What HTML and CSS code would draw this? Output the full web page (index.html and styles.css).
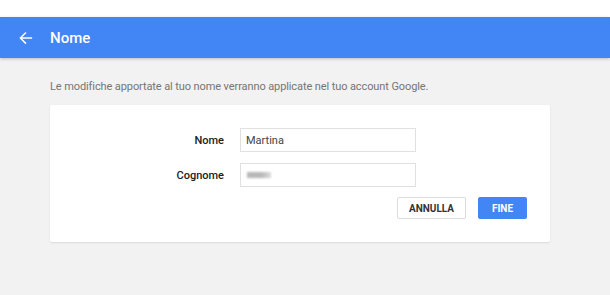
FILE: index.html
```html
<!DOCTYPE html>
<html>
<head>
<meta charset="utf-8">
<link rel="stylesheet" href="styles.css">
</head>
<body>
<div class="topstrip"></div>
<header class="appbar">
  <svg class="back" width="14" height="14" viewBox="0 0 16 16"><path d="M15 7.2H3.6l5-5L7.4 1 0.4 8l7 7 1.2-1.2-5-5H15z" fill="#fff"/></svg>
  <h1 class="title">Nome</h1>
</header>
<main class="content">
  <p class="desc">Le modifiche apportate al tuo nome verranno applicate nel tuo account Google.</p>
  <section class="card">
    <div class="row">
      <label class="label">Nome</label>
      <div class="input">Martina</div>
    </div>
    <div class="row">
      <label class="label">Cognome</label>
      <div class="input"><span class="blur"></span></div>
    </div>
    <div class="actions">
      <button class="btn btn-cancel">ANNULLA</button>
      <button class="btn btn-ok">FINE</button>
    </div>
  </section>
</main>
</body>
</html>
```
FILE: styles.css
```css
html, body {
  margin: 0;
  padding: 0;
}
body {
  background: #f2f2f2;
  font-family: Roboto, "Liberation Sans", Arial, sans-serif;
  width: 610px;
  height: 295px;
  overflow: hidden;
}
.topstrip {
  height: 17px;
  background: #ffffff;
}
.appbar {
  height: 41px;
  background: #4285f4;
  display: flex;
  align-items: center;
  box-shadow: 0 1px 3px rgba(0,0,0,0.22);
  position: relative;
}
.back {
  margin-left: 19px;
  margin-right: 17px;
}
.title {
  margin: 0;
  color: #ffffff;
  font-size: 15px;
  font-weight: 500;
}
.content {
  padding: 22px 60px 0 50px;
}
.desc {
  margin: 0 0 11px 0;
  font-size: 11px;
  letter-spacing: -0.1px;
  color: #757575;
  line-height: 14px;
}
.card {
  background: #ffffff;
  width: 500px;
  box-sizing: border-box;
  padding: 23px 23px 23px 0;
  border-radius: 2px;
  box-shadow: 0 1px 2px rgba(0,0,0,0.1);
}
.row {
  display: flex;
  align-items: center;
  margin-bottom: 11px;
}
.label {
  width: 174px;
  text-align: right;
  font-size: 11px;
  font-weight: 500;
  color: #212121;
  margin-right: 16px;
}
.input {
  width: 176px;
  height: 24px;
  box-sizing: border-box;
  border: 1px solid #e0e0e0;
  font-size: 11px;
  color: #444;
  padding-left: 5px;
  display: flex;
  align-items: center;
}
.blur {
  display: block;
  width: 24px;
  height: 6px;
  margin-left: 1px;
  background: linear-gradient(90deg, #b8b8b8 0, #b8b8b8 60%, #dcdcdc 100%);
  filter: blur(0.8px);
}
.actions {
  display: flex;
  justify-content: flex-end;
  gap: 12px;
  margin-top: -1px;
}
.btn {
  height: 22px;
  font-family: Roboto, "Liberation Sans", Arial, sans-serif;
  font-size: 10px;
  font-weight: 700;
  border-radius: 2px;
  padding: 0;
  cursor: pointer;
}
.btn-cancel {
  width: 69px;
  background: #ffffff;
  border: 1px solid #dcdcdc;
  color: #333;
}
.btn-ok {
  width: 49px;
  background: #4285f4;
  border: none;
  color: #ffffff;
}
```
